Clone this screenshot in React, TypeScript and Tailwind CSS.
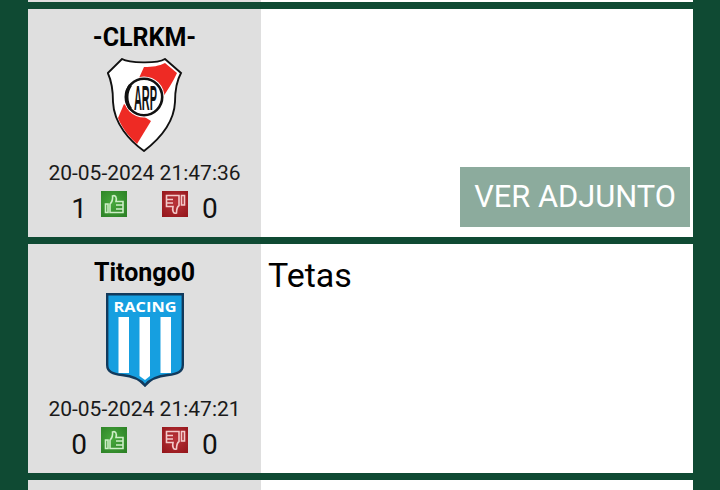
import React from "react";

function RiverShield() {
  return (
    <svg width="76" height="94" viewBox="0 0 76 94">
      <path d="M15 1 C22 5 50 6 58 1 L74 15 C69 24 68 34 68 44 C67 66 50 83 37 93 C23 83 7 66 6 44 C6 34 5 24 0.8 15 Z" fill="#fff" stroke="#111" strokeWidth="1.9" />
      <path d="M37 9 C46 9 52 8 58 5 L70 15 C66 24 60 33 54 42 L32 20 Z" fill="#ee2a24" />
      <path d="M17 46 L44 63 L30 86 C22 79 15 70 11 60 Z" fill="#ee2a24" />
      <circle cx="37" cy="39" r="20.5" fill="#fff" />
      <circle cx="37" cy="39" r="18.2" fill="none" stroke="#111" strokeWidth="2.6" />
      <path d="M23.5 27 C18.5 34 18.5 44 23.5 51" fill="none" stroke="#111" strokeWidth="3.4" />
      <text transform="translate(38.5 52) scale(0.78 2.55)" textAnchor="middle" fontFamily="'Liberation Sans', sans-serif" fontWeight="700" fontSize="14" fill="#111">ARP</text>
    </svg>
  );
}

function RacingShield() {
  return (
    <svg width="78" height="94" viewBox="0 0 78 94">
      <path d="M1.2 1.2 H76.8 V72 C76.8 79 71 81 62 82 C52 83 44 86 39 92.5 C34 86 26 83 16 82 C7 81 1.2 79 1.2 72 Z" fill="#169fe0" stroke="#123a5c" strokeWidth="2.4" />
      <text x="39" y="18.5" textAnchor="middle" textLength="63" lengthAdjust="spacingAndGlyphs" fontFamily="'Open Sans', sans-serif" fontWeight="700" fontSize="14" fill="#fff">RACING</text>
      <rect x="12.5" y="24" width="10.5" height="56" fill="#fff" />
      <path d="M33.5 24 H44 V83 L39 87 L33.5 83 Z" fill="#fff" />
      <rect x="54.5" y="24" width="10.5" height="56" fill="#fff" />
    </svg>
  );
}

function ThumbUp({ id }: { id: string }) {
  return (
    <svg width="26" height="26" viewBox="0 0 26 26" className="shrink-0 block">
      <defs>
        <radialGradient id={id} cx="0.45" cy="0.45" r="0.75">
          <stop offset="0" stopColor="#47a83c" />
          <stop offset="1" stopColor="#2b7f25" />
        </radialGradient>
      </defs>
      <rect width="26" height="26" fill={`url(#${id})`} />
      <path d="M4.5 13 H7 V21.5 H4.5 Z M9 13 C11 11 12 8.5 11.5 5 C14.5 3.5 16 6.5 15 10.5 H22 V21.5 H9 Z M15 14 H22 M15 18 H22" fill="none" stroke="#cdeec6" strokeWidth="1.6" />
    </svg>
  );
}

function ThumbDown({ id }: { id: string }) {
  return (
    <svg width="26" height="26" viewBox="0 0 26 26" className="shrink-0 block">
      <defs>
        <radialGradient id={id} cx="0.5" cy="0.45" r="0.75">
          <stop offset="0" stopColor="#b9343a" />
          <stop offset="1" stopColor="#921419" />
        </radialGradient>
      </defs>
      <rect width="26" height="26" fill={`url(#${id})`} />
      <path d="M4.5 4.5 H17 V14.5 C15 16 14.5 18 14.5 22 C11.5 23 10 20 11 15.5 H4.5 Z M4.5 8.5 H11 M4.5 12 H11 M19.5 4.5 H22.5 V14 H19.5 Z" fill="none" stroke="#f4caca" strokeWidth="1.6" />
    </svg>
  );
}

function Row({ name, shield, date, up, down, children, height, dateMt, rid }: {
  name?: string; shield?: React.ReactNode; date?: string; up?: string; down?: string; children?: React.ReactNode; height: string; dateMt?: string; rid?: string;
}) {
  return (
    <div className={`flex ${height}`}>
      <div className="w-[233px] bg-[#dfdfdf] flex flex-col items-center shrink-0">
        {name && (
          <>
            <div className="text-[25px] font-bold text-black leading-none mt-[16px] h-[24px]">{name}</div>
            <div className="h-[95px] mt-[9px] flex justify-center">{shield}</div>
            <div className={`text-[21px] leading-[24px] text-[#1a1a1a] ${dateMt}`}>{date}</div>
            <div className="flex w-full items-start mt-[6px] h-[38px]">
              <span className="w-[59px] text-right text-[28px] leading-[30px] text-[#111111] mt-[3px]">{up}</span>
              <span className="ml-[14px]"><ThumbUp id={`${rid}u`} /></span>
              <span className="ml-[35px]"><ThumbDown id={`${rid}d`} /></span>
              <span className="ml-[14px] text-[28px] leading-[30px] text-[#111111] mt-[3px]">{down}</span>
            </div>
          </>
        )}
      </div>
      <div className="flex-1 bg-white relative">{children}</div>
    </div>
  );
}

export default function App() {
  return (
    <div className="w-[720px] h-[490px] overflow-hidden bg-[#0f4a33] pl-[28px] pr-[27px] font-['Roboto',sans-serif]">
      <div className="flex h-[2px]">
        <div className="w-[233px] bg-[#dfdfdf]" />
        <div className="flex-1 bg-white" />
      </div>
      <div className="flex flex-col gap-[7px] pt-[7px]">
        <Row rid="a" name="-CLRKM-" shield={<RiverShield />} date="20-05-2024 21:47:36" up="1" down="0" height="h-[228px]" dateMt="mt-[8px]">
          <button className="absolute right-[3px] top-[158px] w-[230px] h-[60px] bg-[#8cab9d] text-white text-[30.8px] flex items-center justify-center">
            VER ADJUNTO
          </button>
        </Row>
        <Row rid="b" name="Titongo0" shield={<RacingShield />} date="20-05-2024 21:47:21" up="0" down="0" height="h-[229px]" dateMt="mt-[9px]">
          <div className="pl-[7px] pt-[11px] text-[34px] leading-[40px] text-black">Tetas</div>
        </Row>
        <Row height="h-[20px]" />
      </div>
    </div>
  );
}
